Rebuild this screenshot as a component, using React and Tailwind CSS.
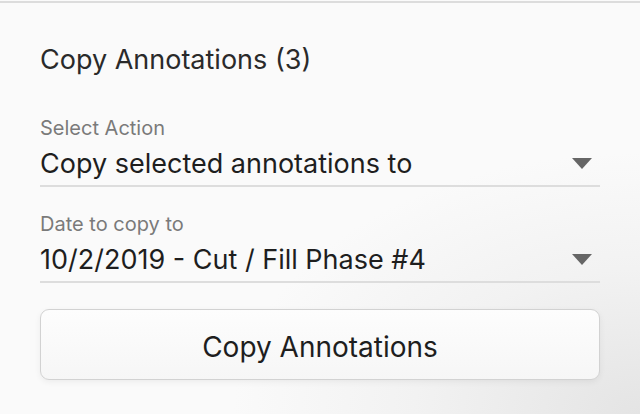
import React from 'react';

const SelectField = ({ label, value, className = '' }) => (
  <div className={`flex flex-col ${className}`}>
    <span className="text-[20px] leading-[24px] text-[#7a7a7a]">{label}</span>
    <div className="mt-[7px] flex items-center justify-between border-b-2 border-[#dddddd] pb-[5px]">
      <span className="text-[27px] leading-[33px] text-[#1e1e1e]">{value}</span>
      <svg width="20" height="11" viewBox="0 0 20 11" className="mr-[8px]">
        <path d="M0 0 L20 0 L10 11 Z" fill="#666666" />
      </svg>
    </div>
  </div>
);

const App = () => {
  return (
    <div
      className="w-[640px] h-[414px] overflow-hidden bg-[#fafafa] pt-[1px]"
      style={{ fontFamily: 'Inter, "Noto Sans", sans-serif' }}
    >
      <div className="h-full border-t-2 border-[#dcdcdc] bg-[radial-gradient(ellipse_at_100%_100%,#e4e4e4_0%,#f2f2f2_25%,#fafafa_45%)] px-[40px]">
        <h2 className="pt-[40px] text-[27px] leading-[33px] text-[#2a2a2a]">Copy Annotations (3)</h2>

        <SelectField className="mt-[40px]" label="Select Action" value="Copy selected annotations to" />
        <SelectField className="mt-[25px]" label="Date to copy to" value="10/2/2019 - Cut / Fill Phase #4" />

        <button className="mt-[26px] flex h-[71px] w-full items-center justify-center rounded-[9px] border-[1.5px] border-[#d2d2d2] bg-[linear-gradient(#fdfdfd,#f6f6f6)] pt-[4px] text-[28px] leading-[34px] text-[#1e1e1e] shadow-[0_2px_6px_rgba(0,0,0,0.06)]">
          Copy Annotations
        </button>
      </div>
    </div>
  );
};

export default App;
